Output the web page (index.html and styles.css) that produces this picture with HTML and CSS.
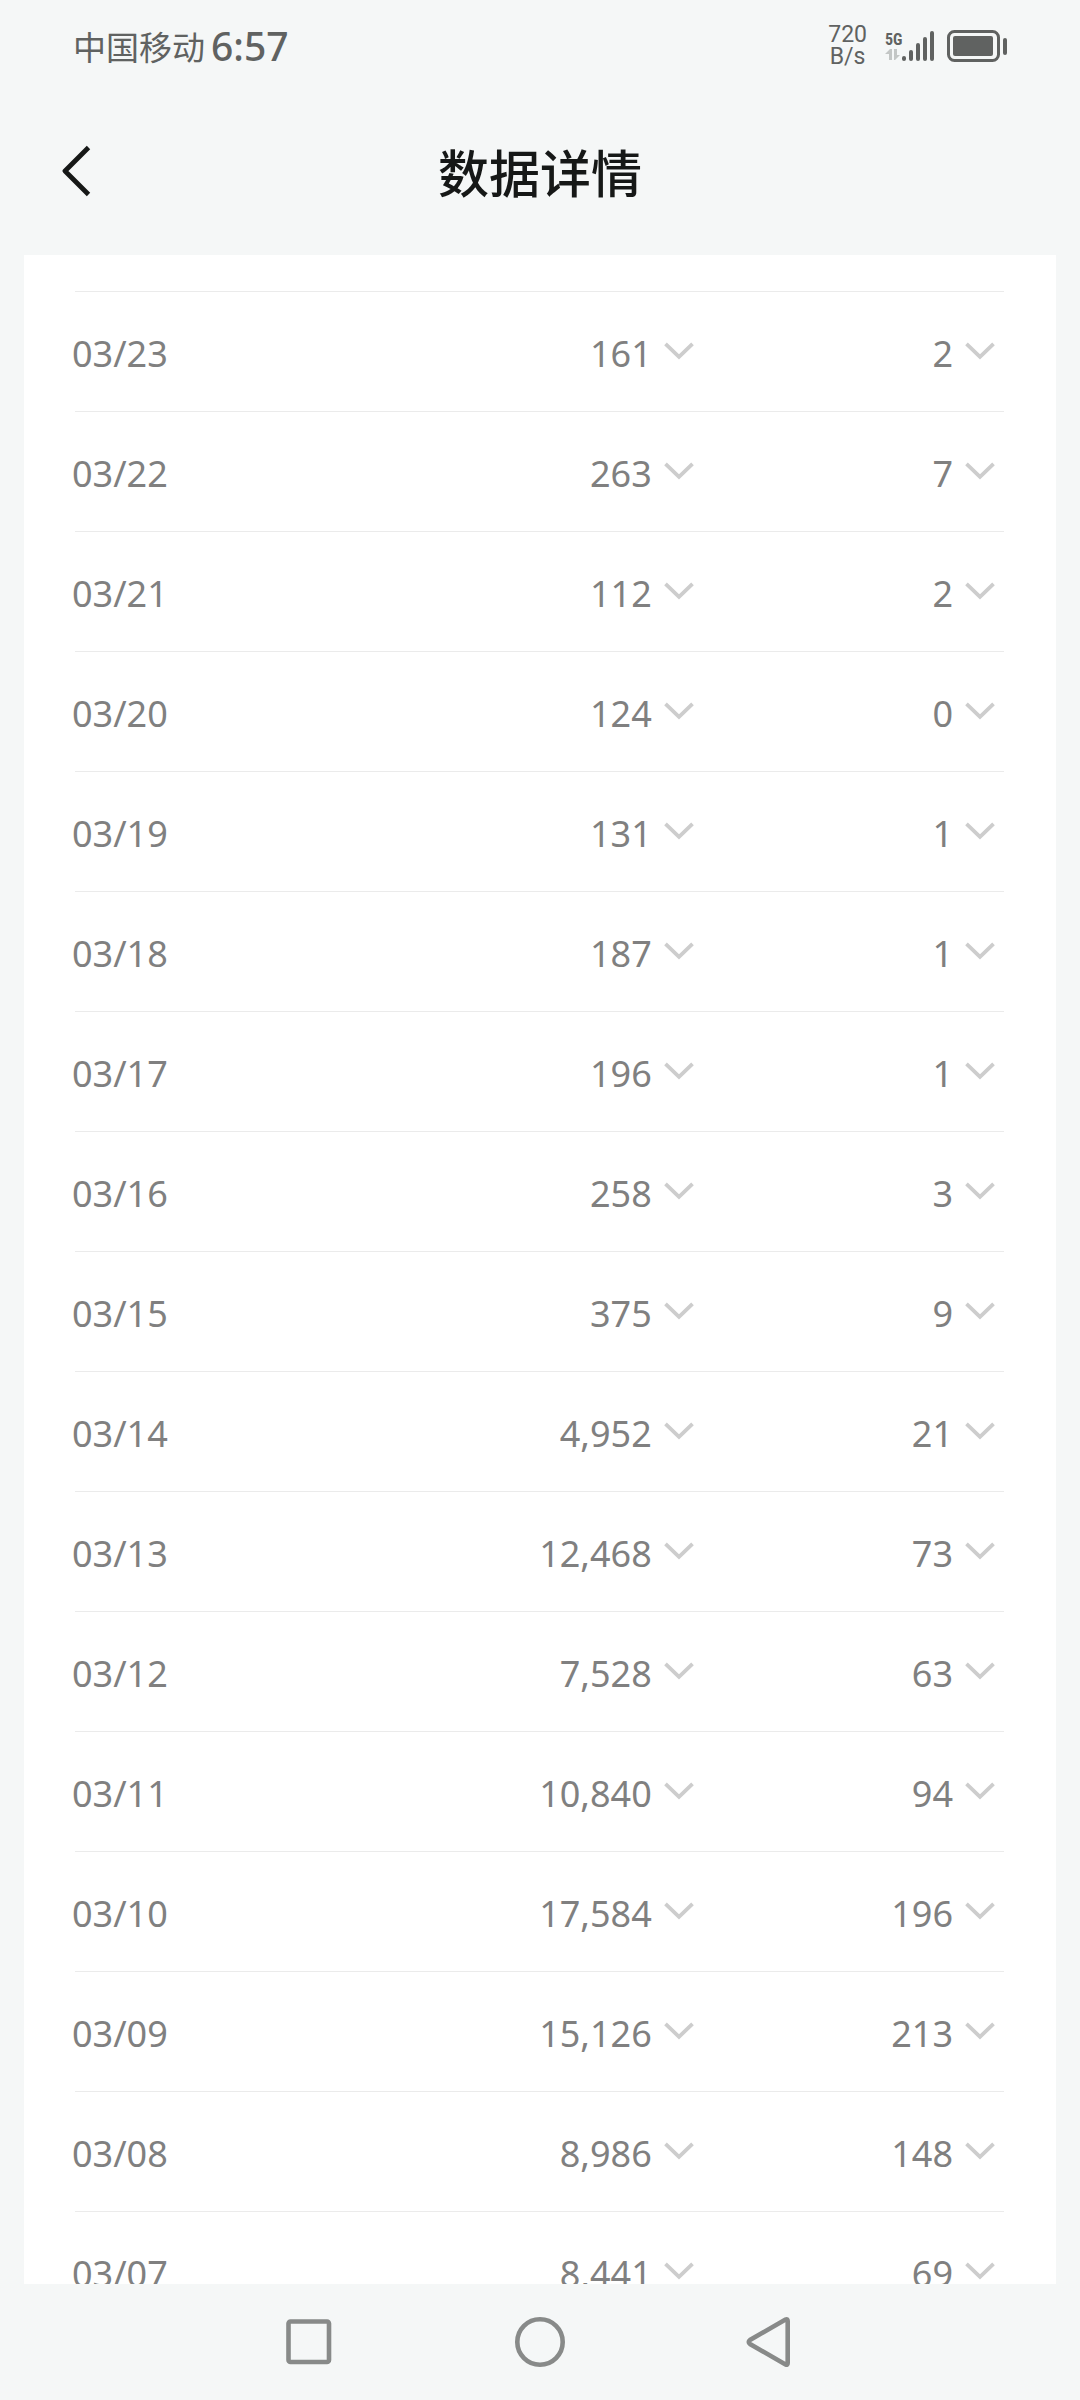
FILE: index.html
```html
<!DOCTYPE html>
<html lang="zh-CN">
<head>
    <meta charset="UTF-8">
    <meta name="viewport" content="width=device-width, initial-scale=1.0">
    <title>数据详情</title>
    <link rel="stylesheet" href="styles.css">
</head>
<body>
    <svg class="symbols" aria-hidden="true">
        <symbol id="chevron" viewBox="0 0 30 18">
            <path d="M1.5 1.8 L15 14.8 L28.5 1.8" fill="none" stroke="currentColor" stroke-width="3.8"/>
        </symbol>
    </svg>

    <div class="status-bar">
        <div class="status-left">
            <span class="carrier">中国移动</span>
            <span class="clock">6:57</span>
        </div>
        <div class="status-right">
            <div class="speed"><span>720</span><span>B/s</span></div>
            <div class="signal">
                <div class="network">
                    <span>5G</span>
                    <svg width="16" height="12" viewBox="0 0 16 12" fill="#c3c6c5" aria-hidden="true">
                        <path d="M0 5 L5 0 H7 V11 H4 V5 Z"/>
                        <path d="M9 0 H12 V6 H15 L10 11 H9 Z"/>
                    </svg>
                </div>
                <svg width="34" height="31" viewBox="0 0 34 31" fill="#606261" aria-hidden="true">
                    <rect x="0" y="25" width="4" height="5" rx="2"/>
                    <rect x="7" y="19" width="4" height="11" rx="2"/>
                    <rect x="14" y="12" width="4" height="18" rx="2"/>
                    <rect x="21" y="6" width="4" height="24" rx="2"/>
                    <rect x="28" y="0" width="4" height="30" rx="2"/>
                </svg>
            </div>
            <svg width="60" height="32" viewBox="0 0 60 32" aria-hidden="true">
                <rect x="1.5" y="1.5" width="50" height="29" rx="6" fill="none" stroke="#606261" stroke-width="3"/>
                <rect x="6" y="6" width="40" height="20" rx="2" fill="#606261"/>
                <rect x="56" y="8" width="4" height="17" rx="2" fill="#606261"/>
            </svg>
        </div>
    </div>

    <header class="header">
        <button type="button" class="back" aria-label="返回">
            <svg width="30" height="52" viewBox="0 0 30 52" aria-hidden="true">
                <path d="M26.5 2.5 L3 26 L26.5 49.5" fill="none" stroke="#161817" stroke-width="4.8" stroke-linejoin="round"/>
            </svg>
        </button>
        <h1>数据详情</h1>
    </header>

    <main class="card">
        <table class="data">
            <tbody>
                <tr>
                    <th scope="row">03/23</th>
                    <td><button type="button">161<svg><use href="#chevron"/></svg></button></td>
                    <td><button type="button">2<svg><use href="#chevron"/></svg></button></td>
                </tr>
                <tr>
                    <th scope="row">03/22</th>
                    <td><button type="button">263<svg><use href="#chevron"/></svg></button></td>
                    <td><button type="button">7<svg><use href="#chevron"/></svg></button></td>
                </tr>
                <tr>
                    <th scope="row">03/21</th>
                    <td><button type="button">112<svg><use href="#chevron"/></svg></button></td>
                    <td><button type="button">2<svg><use href="#chevron"/></svg></button></td>
                </tr>
                <tr>
                    <th scope="row">03/20</th>
                    <td><button type="button">124<svg><use href="#chevron"/></svg></button></td>
                    <td><button type="button">0<svg><use href="#chevron"/></svg></button></td>
                </tr>
                <tr>
                    <th scope="row">03/19</th>
                    <td><button type="button">131<svg><use href="#chevron"/></svg></button></td>
                    <td><button type="button">1<svg><use href="#chevron"/></svg></button></td>
                </tr>
                <tr>
                    <th scope="row">03/18</th>
                    <td><button type="button">187<svg><use href="#chevron"/></svg></button></td>
                    <td><button type="button">1<svg><use href="#chevron"/></svg></button></td>
                </tr>
                <tr>
                    <th scope="row">03/17</th>
                    <td><button type="button">196<svg><use href="#chevron"/></svg></button></td>
                    <td><button type="button">1<svg><use href="#chevron"/></svg></button></td>
                </tr>
                <tr>
                    <th scope="row">03/16</th>
                    <td><button type="button">258<svg><use href="#chevron"/></svg></button></td>
                    <td><button type="button">3<svg><use href="#chevron"/></svg></button></td>
                </tr>
                <tr>
                    <th scope="row">03/15</th>
                    <td><button type="button">375<svg><use href="#chevron"/></svg></button></td>
                    <td><button type="button">9<svg><use href="#chevron"/></svg></button></td>
                </tr>
                <tr>
                    <th scope="row">03/14</th>
                    <td><button type="button">4,952<svg><use href="#chevron"/></svg></button></td>
                    <td><button type="button">21<svg><use href="#chevron"/></svg></button></td>
                </tr>
                <tr>
                    <th scope="row">03/13</th>
                    <td><button type="button">12,468<svg><use href="#chevron"/></svg></button></td>
                    <td><button type="button">73<svg><use href="#chevron"/></svg></button></td>
                </tr>
                <tr>
                    <th scope="row">03/12</th>
                    <td><button type="button">7,528<svg><use href="#chevron"/></svg></button></td>
                    <td><button type="button">63<svg><use href="#chevron"/></svg></button></td>
                </tr>
                <tr>
                    <th scope="row">03/11</th>
                    <td><button type="button">10,840<svg><use href="#chevron"/></svg></button></td>
                    <td><button type="button">94<svg><use href="#chevron"/></svg></button></td>
                </tr>
                <tr>
                    <th scope="row">03/10</th>
                    <td><button type="button">17,584<svg><use href="#chevron"/></svg></button></td>
                    <td><button type="button">196<svg><use href="#chevron"/></svg></button></td>
                </tr>
                <tr>
                    <th scope="row">03/09</th>
                    <td><button type="button">15,126<svg><use href="#chevron"/></svg></button></td>
                    <td><button type="button">213<svg><use href="#chevron"/></svg></button></td>
                </tr>
                <tr>
                    <th scope="row">03/08</th>
                    <td><button type="button">8,986<svg><use href="#chevron"/></svg></button></td>
                    <td><button type="button">148<svg><use href="#chevron"/></svg></button></td>
                </tr>
                <tr>
                    <th scope="row">03/07</th>
                    <td><button type="button">8,441<svg><use href="#chevron"/></svg></button></td>
                    <td><button type="button">69<svg><use href="#chevron"/></svg></button></td>
                </tr>
            </tbody>
        </table>
    </main>

    <nav class="nav-bar">
        <button type="button" aria-label="最近任务">
            <svg width="52" height="52" viewBox="0 0 52 52" aria-hidden="true">
                <rect x="5.5" y="5.5" width="40.5" height="40.5" rx="2"/>
            </svg>
        </button>
        <button type="button" aria-label="主页">
            <svg width="52" height="52" viewBox="0 0 52 52" aria-hidden="true">
                <circle cx="26" cy="26" r="22.7"/>
            </svg>
        </button>
        <button type="button" aria-label="返回上一页">
            <svg width="52" height="52" viewBox="0 0 52 52" aria-hidden="true">
                <path d="M40.5 3.5 Q42.7 2.5 42.7 5 V47 Q42.7 49.5 40.5 48.5 L5 28 Q2.5 26 5 24 Z"/>
            </svg>
        </button>
    </nav>
</body>
</html>
```

FILE: styles.css
```css
* {
    box-sizing: border-box;
}
body {
    display: flex;
    flex-direction: column;
    height: 100vh;
    margin: 0;
    background: #f5f7f7;
    color: #161817;
    font-family: "Noto Sans", "Noto Sans CJK SC", sans-serif;
}
button {
    display: flex;
    align-items: center;
    margin: 0;
    padding: 0;
    border: none;
    background: none;
    color: inherit;
    font: inherit;
    cursor: pointer;
}
svg {
    display: block;
    flex: none;
}
.symbols {
    display: none;
}

/* status bar */
.status-bar {
    display: flex;
    justify-content: space-between;
    align-items: center;
    flex: none;
    height: 92px;
    padding: 0 73px 0 73px;
    color: #606261;
}
.status-left,
.status-right,
.signal {
    display: flex;
    align-items: center;
}
.status-left {
    gap: 6px;
}
.carrier {
    font-family: "Noto Sans CJK SC", sans-serif;
    font-size: 33px;
    line-height: 48px;
}
.clock {
    font-size: 39px;
    font-weight: 500;
    line-height: 48px;
}
.speed {
    display: flex;
    flex-direction: column;
    align-items: center;
    margin-right: 18px;
    font-family: Roboto, sans-serif;
    font-size: 23px;
    line-height: 22px;
}
.signal {
    margin-right: 11px;
}
.network {
    width: 17px;
    font-family: "Liberation Sans Narrow", "Roboto Condensed", Roboto, sans-serif;
    font-size: 16px;
    font-weight: bold;
    line-height: 18px;
}

/* title */
.header {
    display: grid;
    grid-template-columns: 1fr auto 1fr;
    align-items: center;
    flex: none;
    height: 163px;
    padding: 0 62px 5px;
}
.header h1 {
    margin: 0;
    font-family: "Noto Sans CJK SC", sans-serif;
    font-size: 51px;
    font-weight: 500;
    line-height: 72px;
}
.back {
    justify-self: start;
}

/* list */
.card {
    flex: 1;
    min-height: 0;
    margin: 0 24px;
    padding: 36px 52px 0 48px;
    overflow: hidden;
    background: #fff;
}
.data {
    width: 100%;
    table-layout: fixed;
    border-collapse: collapse;
    color: #808080;
    font-size: 36px;
    line-height: 48px;
}
.data tr {
    height: 120px;
    background: linear-gradient(#ebebeb, #ebebeb) right top / calc(100% - 3px) 1px no-repeat;
}
.data th,
.data td {
    padding: 6px 12px 0 0;
    vertical-align: middle;
}
.data th {
    width: 34%;
    font-weight: normal;
    text-align: left;
}
.data td:last-child {
    width: 32%;
    padding-right: 9px;
}
.data button {
    gap: 12px;
    margin-left: auto;
}
.data svg {
    width: 30px;
    height: 18px;
    margin-bottom: 6px;
    color: #cdcdcd;
}

/* system navigation */
.nav-bar {
    display: flex;
    justify-content: center;
    align-items: center;
    gap: 179px;
    flex: none;
    height: 116px;
}
.nav-bar svg {
    fill: none;
    stroke: #888a89;
    stroke-width: 4.6;
}
```
